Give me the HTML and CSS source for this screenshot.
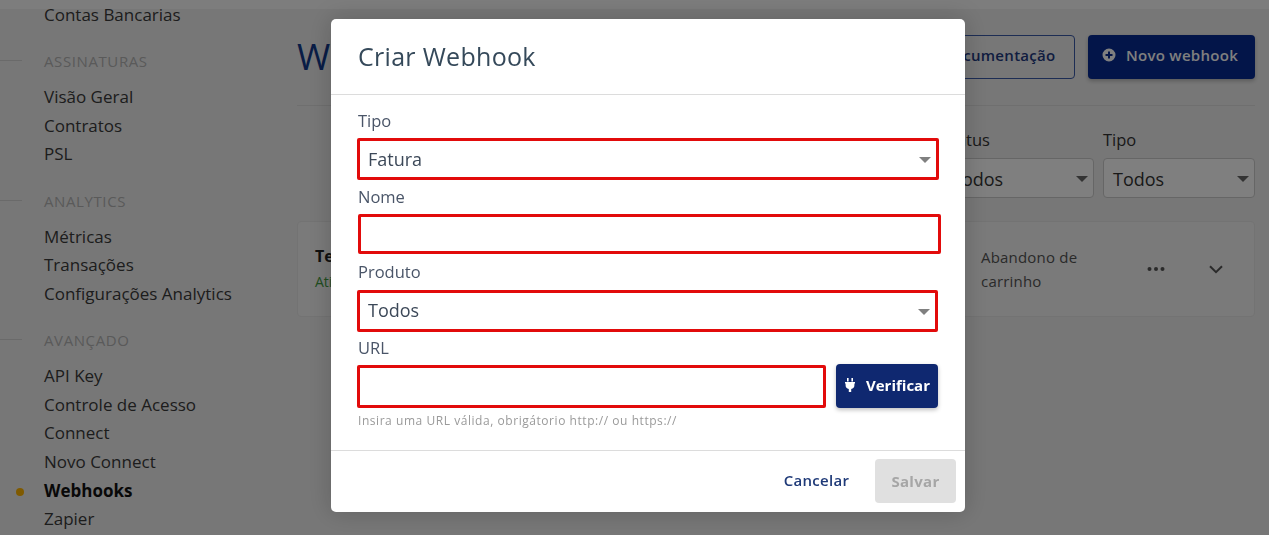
FILE: index.html
```html
<!DOCTYPE html>
<html lang="pt-BR">
<head>
	<meta charset="UTF-8">
	<meta name="viewport" content="width=device-width, initial-scale=1.0">
	<title>Criar Webhook</title>
	<link rel="stylesheet" href="styles.css">
</head>
<body>

	<div class="page">
		<aside class="sidebar">
			<div class="sidebar__item">Contas Bancarias</div>

			<div class="sidebar__title">ASSINATURAS</div>
			<div class="sidebar__item">Visão Geral</div>
			<div class="sidebar__item">Contratos</div>
			<div class="sidebar__item">PSL</div>

			<div class="sidebar__title">ANALYTICS</div>
			<div class="sidebar__item">Métricas</div>
			<div class="sidebar__item">Transações</div>
			<div class="sidebar__item">Configurações Analytics</div>

			<div class="sidebar__title">AVANÇADO</div>
			<div class="sidebar__item">API Key</div>
			<div class="sidebar__item">Controle de Acesso</div>
			<div class="sidebar__item">Connect</div>
			<div class="sidebar__item">Novo Connect</div>
			<div class="sidebar__item sidebar__item--active">Webhooks</div>
			<div class="sidebar__item">Zapier</div>
		</aside>

		<main class="main">
			<div class="main__head">
				<h1 class="main__title">Webhooks</h1>
				<button class="btn btn--outline">Documentação</button>
				<button class="btn btn--primary">
					<svg class="btn__icon" viewBox="0 0 16 16">
						<path fill="currentColor" fill-rule="evenodd" d="M8 1.5a6.5 6.5 0 1 0 0 13 6.5 6.5 0 0 0 0-13zM7 4.500h2V7h2.500v2H9v2.500H7V9H4.500V7H7z"/>
					</svg>
					Novo webhook
				</button>
			</div>

			<div class="filters">
				<div class="filters__item">
					<div class="filters__label">Status</div>
					<div class="filters__select">Todos</div>
				</div>
				<div class="filters__item">
					<div class="filters__label">Tipo</div>
					<div class="filters__select">Todos</div>
				</div>
			</div>

			<div class="hook">
				<div class="hook__info">
					<div class="hook__name">Teste</div>
					<div class="hook__status">Ativo</div>
				</div>
				<div class="hook__type">Abandono de carrinho</div>
				<svg class="hook__dots" viewBox="0 0 18 4">
					<circle cx="2.5" cy="2" r="2" fill="currentColor"/>
					<circle cx="9" cy="2" r="2" fill="currentColor"/>
					<circle cx="15.5" cy="2" r="2" fill="currentColor"/>
				</svg>
				<svg class="hook__chevron" viewBox="0 0 14 9">
					<path d="M1 1.2l6 6 6-6" fill="none" stroke="currentColor" stroke-width="2"/>
				</svg>
			</div>
		</main>
	</div>

	<div class="topbar"></div>
	<div class="overlay"></div>

	<div class="modal">
		<div class="modal__header">Criar Webhook</div>

		<form class="modal__body">
			<label class="field__label">Tipo</label>
			<div class="select select--tipo">
				<select><option>Fatura</option></select>
			</div>

			<label class="field__label field__label--nome">Nome</label>
			<input class="input input--nome" type="text">

			<label class="field__label field__label--produto">Produto</label>
			<div class="select select--produto">
				<select><option>Todos</option></select>
			</div>

			<label class="field__label field__label--url">URL</label>
			<div class="url">
				<input class="input input--url" type="text">
				<button class="btn btn--verify" type="button">
					<svg class="btn__plug" viewBox="0 0 10 14">
						<path fill="currentColor" d="M2 0h1.600v3.500H2zM6.400 0H8v3.500H6.400zM0 4h10v1.400h-.6v1.800c0 2-1.200 3.400-3.200 3.800V14H3.800v-3C1.800 10.600.6 9.200.6 7.200V5.400H0z"/>
					</svg>
					Verificar
				</button>
			</div>
			<div class="hint">Insira uma URL válida, obrigátorio http:// ou https://</div>
		</form>

		<div class="modal__footer">
			<button class="btn btn--link">Cancelar</button>
			<button class="btn btn--disabled">Salvar</button>
		</div>
	</div>

</body>
</html>
```

FILE: styles.css
```css
* {
	margin: 0;
	padding: 0;
	box-sizing: border-box;
	font-family: "Open Sans", sans-serif;
}

html, body {
	height: 100%;
	overflow: hidden;
}

body {
	background: #efefef;
	color: #333;
}

.page {
	display: flex;
	height: 535px;
	overflow: hidden;
}

/* menu lateral */
.sidebar {
	width: 297px;
	flex-shrink: 0;
	padding: 1px 0 0 44px;
}

.sidebar__item {
	position: relative;
	height: 28.7px;
	line-height: 28.7px;
	font-size: 17px;
	color: #3a3a3a;
	white-space: nowrap;
}

.sidebar__item--active {
	font-weight: 700;
	color: #111;
}

.sidebar__item--active::before {
	content: "";
	position: absolute;
	left: -28px;
	top: 11px;
	width: 8px;
	height: 8px;
	border-radius: 50%;
	background: #ffb400;
}

.sidebar__title {
	position: relative;
	height: 24px;
	line-height: 24px;
	margin: 19.8px 0 9.6px;
	font-size: 15px;
	letter-spacing: .6px;
	color: #b4b4b4;
}

.sidebar__title::before {
	content: "";
	position: absolute;
	left: -44px;
	top: 11px;
	width: 22px;
	border-top: 1px solid #d4d4d4;
}

/* conteudo */
.main {
	flex: 1;
	padding: 35px 14px 0 0;
	min-width: 0;
}

.main__head {
	display: flex;
	align-items: center;
	gap: 13px;
	height: 71px;
	padding-bottom: 27px;
	border-bottom: 1px solid #dedede;
}

.main__title {
	flex: 1;
	font-size: 36px;
	font-weight: 400;
	color: #123a8c;
}

.btn {
	border: none;
	border-radius: 4px;
	font-size: 15px;
	font-weight: 600;
	letter-spacing: .3px;
	cursor: pointer;
}

.btn--outline {
	width: 152px;
	height: 44px;
	padding-bottom: 3px;
	background: transparent;
	border: 1px solid #3a5aa8;
	color: #1f3a80;
}

.btn--primary {
	display: flex;
	align-items: center;
	justify-content: center;
	gap: 9px;
	width: 167px;
	height: 44px;
	padding: 0 4px 3px 0;
	background: #062a92;
	color: #fff;
	box-shadow: 0 2px 4px rgba(0, 0, 0, .25);
}

.btn__icon {
	width: 16px;
	height: 16px;
}

.filters {
	display: flex;
	justify-content: flex-end;
	gap: 9px;
	margin-top: 22px;
}

.filters__item {
	width: 152px;
}

.filters__label {
	height: 30px;
	line-height: 24px;
	font-size: 16.5px;
}

.filters__select {
	position: relative;
	height: 40px;
	line-height: 40px;
	padding-left: 9px;
	background: #fff;
	border: 1px solid #ccc;
	border-radius: 4px;
	font-size: 18px;
}

.filters__select::after {
	content: "";
	position: absolute;
	right: 5px;
	top: 17px;
	border: 6px solid transparent;
	border-top: 6px solid #666;
	border-bottom: 0;
}

.hook {
	display: flex;
	align-items: center;
	height: 96px;
	margin-top: 23px;
	padding: 0 31px 0 17px;
	background: #f4f4f4;
	border: 1px solid #e6e6e6;
	border-radius: 4px;
	color: #555;
}

.hook__info {
	flex: 1;
	line-height: 25px;
	font-size: 16px;
}

.hook__name {
	font-weight: 700;
	color: #222;
}

.hook__status {
	font-size: 14px;
	color: #3f9a3f;
}

.hook__type {
	width: 166px;
	padding-right: 40px;
	font-size: 15px;
	line-height: 24px;
	letter-spacing: .2px;
}

.hook__dots {
	width: 18px;
	height: 4px;
}

.hook__chevron {
	width: 14px;
	height: 9px;
	margin-left: 44px;
}

/* modal */
.topbar {
	position: fixed;
	top: 0;
	left: 0;
	right: 0;
	height: 9px;
	background: #fafafa;
}

.overlay {
	position: fixed;
	inset: 0;
	background: rgba(0, 0, 0, .5);
}

.modal {
	position: fixed;
	left: 331px;
	top: 19px;
	width: 634px;
	height: 493px;
	display: flex;
	flex-direction: column;
	background: #fff;
	border-radius: 5px;
	box-shadow: 0 0 24px rgba(0, 0, 0, .2);
}

.modal__header {
	height: 76px;
	padding-left: 27px;
	line-height: 75px;
	border-bottom: 1px solid #dcdcdc;
	font-size: 25px;
	letter-spacing: .3px;
	color: #35495a;
}

.modal__body {
	flex: 1;
	padding: 14px 24px 0 26px;
}

.field__label {
	display: block;
	height: 24px;
	line-height: 24px;
	padding-left: 1px;
	font-size: 16.5px;
	color: #4a5568;
}

.field__label--nome {
	margin-top: 5px;
}

.field__label--produto {
	margin-top: 6px;
}

.field__label--url {
	margin-top: 4px;
}

.select {
	position: relative;
	margin-top: 5px;
	height: 42px;
}

.select::after {
	content: "";
	position: absolute;
	right: 8px;
	top: 19px;
	border: 6px solid transparent;
	border-top: 6px solid #808080;
	border-bottom: 0;
}

.select--tipo {
	width: 582px;
}

.select--produto {
	width: 581px;
	margin-top: 6px;
}

.select select {
	width: 100%;
	height: 100%;
	appearance: none;
	padding-left: 8px;
	background: #fff;
	border: 3px solid #e20b0b;
	border-radius: 2px;
	font-size: 18px;
	color: #3c4858;
	outline: none;
}

.select--produto select {
	padding-bottom: 2px;
}

.input {
	display: block;
	background: #fff;
	border: 3px solid #e20b0b;
	border-radius: 2px;
	outline: none;
}

.input--nome {
	width: 583px;
	height: 40px;
	margin: 5px 0 0 1px;
}

.url {
	display: flex;
	align-items: flex-start;
	gap: 10px;
	margin-top: 4px;
}

.input--url {
	width: 469px;
	height: 43px;
	margin-top: 1px;
}

.btn--verify {
	display: flex;
	align-items: center;
	gap: 11px;
	width: 102px;
	height: 44px;
	padding: 0 0 2px 9px;
	background: #0f2870;
	font-weight: 700;
	color: #fff;
	letter-spacing: 0;
	box-shadow: 0 2px 4px rgba(0, 0, 0, .25);
}

.btn__plug {
	width: 10px;
	height: 14px;
}

.hint {
	margin-top: 4px;
	padding-left: 1px;
	line-height: 18px;
	font-size: 12px;
	letter-spacing: .55px;
	color: #9a9a9a;
}

.modal__footer {
	display: flex;
	align-items: center;
	justify-content: flex-end;
	gap: 22px;
	height: 62px;
	padding: 0 9px 2px 0;
	border-top: 1px solid #dcdcdc;
}

.btn--link {
	width: 73px;
	height: 44px;
	padding-bottom: 1px;
	background: transparent;
	color: #1f3a78;
}

.btn--disabled {
	width: 81px;
	height: 44px;
	background: #e0e0e0;
	font-weight: 700;
	color: #a6a6a6;
}
```
